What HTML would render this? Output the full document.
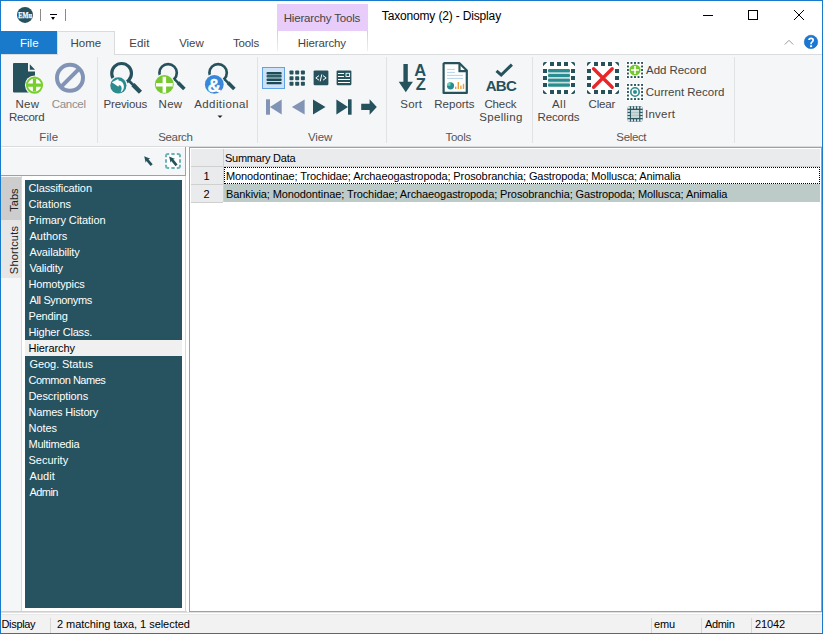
<!DOCTYPE html>
<html><head><meta charset="utf-8">
<style>
*{margin:0;padding:0;box-sizing:border-box}
html,body{width:823px;height:634px;overflow:hidden;background:#fff}
body{position:relative;font-family:"Liberation Sans",sans-serif;font-size:12px;color:#262626}
.a{position:absolute}
.t{position:absolute;white-space:nowrap;line-height:14px;letter-spacing:-0.4px}
.s{font-size:11px;letter-spacing:-0.1px}
#bl{left:0;top:0;width:1px;height:634px;background:#1979ca}
#br{left:822px;top:0;width:1px;height:634px;background:#1979ca}
#bt{left:0;top:0;width:823px;height:1px;background:#1979ca}
#bb{left:0;top:633px;width:823px;height:1px;background:#1979ca}
.rib{left:1px;top:54px;width:821px;height:93px;background:#f5f6f7;border-top:1px solid #dadbdc;border-bottom:1px solid #dadbdc}
.sep{position:absolute;top:57px;width:1px;height:86px;background:#e1e2e4}
.lbl{position:absolute;text-align:center;white-space:nowrap;line-height:13px;color:#444;letter-spacing:-0.4px}
.glbl{position:absolute;text-align:center;white-space:nowrap;color:#555;line-height:14px;letter-spacing:-0.4px}
.li{position:absolute;left:29px;color:#fff;font-size:11px;white-space:nowrap;line-height:16px;letter-spacing:-0.1px}
</style></head><body>
<!-- title bar -->
<div class="a" style="left:1px;top:1px;width:821px;height:30px;background:#fff"></div>
<svg class="a" style="left:0;top:0" width="40" height="30"><circle cx="25" cy="14.9" r="8" fill="#25525d"/><text x="18.3" y="17.6" font-family="Liberation Serif" font-weight="bold" font-size="7.2" fill="#fff" stroke="#fff" stroke-width="0.25" textLength="13.6" lengthAdjust="spacingAndGlyphs">EMu</text></svg>
<div class="a" style="left:40px;top:9px;width:1px;height:12px;background:#8a8a8a"></div>
<div class="a" style="left:50px;top:14px;width:7px;height:1px;background:#000"></div>
<div class="a" style="left:51px;top:17px;width:0;height:0;border-left:2.6px solid transparent;border-right:2.6px solid transparent;border-top:3.2px solid #000"></div>
<div class="a" style="left:65px;top:9px;width:1px;height:12px;background:#8a8a8a"></div>
<!-- contextual -->
<div class="a" style="left:277px;top:4px;width:91px;height:27px;background:#e8cdfa"></div>
<!-- window buttons -->
<div class="a" style="left:703px;top:15px;width:10px;height:1px;background:#000"></div>
<div class="a" style="left:748px;top:10px;width:10px;height:10px;border:1px solid #000"></div>
<svg class="a" style="left:793px;top:9px" width="12" height="12"><path d="M1 1L11 11M11 1L1 11" stroke="#000" stroke-width="1"/></svg>
<!-- tabs -->
<div class="a" style="left:1px;top:31px;width:56px;height:23px;background:#1979ca"></div>
<div class="a" style="left:57px;top:31px;width:58px;height:24px;background:#f5f6f7;border:1px solid #dadbdc;border-bottom:none;z-index:2"></div>
<div class="a" style="left:277px;top:31px;width:1px;height:20px;background:linear-gradient(#d0d0d0,#f0f0f0)"></div>
<div class="a" style="left:367px;top:31px;width:1px;height:20px;background:linear-gradient(#d0d0d0,#f0f0f0)"></div>
<svg class="a" style="left:784px;top:38px" width="10" height="8"><path d="M0.8 6.5L5 2.3L9.2 6.5" stroke="#9a9a9a" stroke-width="1" fill="none"/></svg>
<svg class="a" style="left:0;top:0" width="823" height="60"><circle cx="811" cy="41.9" r="6.7" fill="#1a77d2" stroke="#1266bb" stroke-width="0.6"/><path d="M809 40.1Q809 38.3 811.1 38.3Q813.2 38.3 813.2 40.1Q813.2 41.3 811.9 42.1Q811.1 42.6 811.1 43.8V44.3" fill="none" stroke="#fff" stroke-width="1.7"/><rect x="810.1" y="45.3" width="2" height="1.8" fill="#fff"/></svg>
<!-- ribbon -->
<div class="a rib"></div>
<div class="sep" style="left:97px"></div>
<div class="sep" style="left:257px"></div>
<div class="sep" style="left:386px"></div>
<div class="sep" style="left:532px"></div>
<div class="sep" style="left:734px"></div>


<!--TXT-->
<div class="t" style="left:15.5px;top:98px;color:#444;font-size:11.5px;letter-spacing:0.25px;line-height:13px;z-index:3">New</div>
<div class="t" style="left:8.9px;top:111px;color:#444;font-size:11.5px;letter-spacing:-0.28px;line-height:13px;z-index:3">Record</div>
<div class="t" style="left:51.7px;top:98px;color:#8e8e8e;font-size:11.5px;letter-spacing:-0.30px;line-height:13px;z-index:3">Cancel</div>
<div class="t" style="left:103.4px;top:98px;color:#444;font-size:11.5px;letter-spacing:-0.13px;line-height:13px;z-index:3">Previous</div>
<div class="t" style="left:158.6px;top:98px;color:#444;font-size:11.5px;letter-spacing:0.25px;line-height:13px;z-index:3">New</div>
<div class="t" style="left:194.2px;top:98px;color:#444;font-size:11.5px;letter-spacing:0.41px;line-height:13px;z-index:3">Additional</div>
<div class="t" style="left:400.3px;top:98px;color:#444;font-size:11.5px;letter-spacing:0.20px;line-height:13px;z-index:3">Sort</div>
<div class="t" style="left:434.3px;top:98px;color:#444;font-size:11.5px;letter-spacing:0.00px;line-height:13px;z-index:3">Reports</div>
<div class="t" style="left:484.4px;top:98px;color:#444;font-size:11.5px;letter-spacing:-0.12px;line-height:13px;z-index:3">Check</div>
<div class="t" style="left:479.3px;top:111px;color:#444;font-size:11.5px;letter-spacing:0.30px;line-height:13px;z-index:3">Spelling</div>
<div class="t" style="left:551.9px;top:98px;color:#444;font-size:11.5px;letter-spacing:0.55px;line-height:13px;z-index:3">All</div>
<div class="t" style="left:537.5px;top:111px;color:#444;font-size:11.5px;letter-spacing:-0.15px;line-height:13px;z-index:3">Records</div>
<div class="t" style="left:588.5px;top:98px;color:#444;font-size:11.5px;letter-spacing:-0.17px;line-height:13px;z-index:3">Clear</div>
<div class="t" style="left:646.1px;top:64px;color:#444;font-size:11.5px;letter-spacing:-0.06px;line-height:13px;z-index:3">Add Record</div>
<div class="t" style="left:645.7px;top:86px;color:#444;font-size:11.5px;letter-spacing:0.01px;line-height:13px;z-index:3">Current Record</div>
<div class="t" style="left:645.1px;top:108px;color:#444;font-size:11.5px;letter-spacing:0.22px;line-height:13px;z-index:3">Invert</div>
<div class="t" style="left:39.3px;top:131px;color:#555;font-size:11.5px;letter-spacing:0.10px;line-height:13px;z-index:3">File</div>
<div class="t" style="left:158.2px;top:131px;color:#555;font-size:11.5px;letter-spacing:-0.34px;line-height:13px;z-index:3">Search</div>
<div class="t" style="left:308.0px;top:131px;color:#555;font-size:11.5px;letter-spacing:-0.10px;line-height:13px;z-index:3">View</div>
<div class="t" style="left:445.4px;top:131px;color:#555;font-size:11.5px;letter-spacing:-0.25px;line-height:13px;z-index:3">Tools</div>
<div class="t" style="left:616.3px;top:131px;color:#555;font-size:11.5px;letter-spacing:-0.34px;line-height:13px;z-index:3">Select</div>
<div class="t" style="left:283.7px;top:12px;color:#444;font-size:11.5px;letter-spacing:-0.17px;line-height:13px;z-index:3">Hierarchy Tools</div>
<div class="t" style="left:381.8px;top:9px;color:#000;font-size:12px;letter-spacing:-0.16px;line-height:14px;z-index:3">Taxonomy (2) - Display</div>
<div class="t" style="left:20.0px;top:37px;color:#fff;font-size:11.5px;letter-spacing:0.00px;line-height:13px;z-index:3">File</div>
<div class="t" style="left:70.4px;top:37px;color:#444;font-size:11.5px;letter-spacing:0.03px;line-height:13px;z-index:3">Home</div>
<div class="t" style="left:129.2px;top:37px;color:#444;font-size:11.5px;letter-spacing:0.17px;line-height:13px;z-index:3">Edit</div>
<div class="t" style="left:179.2px;top:37px;color:#444;font-size:11.5px;letter-spacing:-0.07px;line-height:13px;z-index:3">View</div>
<div class="t" style="left:232.9px;top:37px;color:#444;font-size:11.5px;letter-spacing:-0.15px;line-height:13px;z-index:3">Tools</div>
<div class="t" style="left:297.8px;top:37px;color:#444;font-size:11.5px;letter-spacing:-0.11px;line-height:13px;z-index:3">Hierarchy</div>
<!--/TXT-->
<!-- lower panel -->
<div class="a" style="left:1px;top:147px;width:185px;height:28px;background:#f5f6f7;border-right:1px solid #a0a0a0"></div>
<div class="a" style="left:1px;top:175px;width:185px;height:1px;background:#a0a0a0"></div>
<div class="a" style="left:1px;top:147px;width:184px;height:1px;background:#fff"></div>
<div class="a" style="left:1px;top:176px;width:20px;height:435px;background:#f5f6f7"></div>
<div class="a" style="left:21px;top:176px;width:165px;height:436px;background:#fff;border-left:1px solid #d9d9d9;border-right:1px solid #d9d9d9;border-bottom:1px solid #cfcfcf"></div>
<div class="a" style="left:1px;top:177px;width:20px;height:43px;background:#cdcdcd"></div>
<div class="a" style="left:1px;top:220px;width:20px;height:58px;background:#e6e6e6"></div>
<div class="t" style="left:-5.7px;top:192.6px;width:40px;text-align:center;transform:rotate(-90deg);font-size:11px;letter-spacing:0;color:#222">Tabs</div>
<div class="t" style="left:-10.7px;top:242.5px;width:50px;text-align:center;transform:rotate(-90deg);font-size:11px;letter-spacing:0.2px;color:#222">Shortcuts</div>
<div class="a" style="left:25px;top:180px;width:157px;height:428px;background:#26535f"></div>
<div class="a" style="left:25px;top:340px;width:157px;height:16px;background:#f0f0f0"></div>

<div class="li" style="left:28.5px;top:180px;letter-spacing:-0.10px">Classification</div>
<div class="li" style="left:28.5px;top:196px;letter-spacing:-0.04px">Citations</div>
<div class="li" style="left:28.5px;top:212px;letter-spacing:-0.08px">Primary Citation</div>
<div class="li" style="left:29.5px;top:228px;letter-spacing:-0.02px">Authors</div>
<div class="li" style="left:29.5px;top:244px;letter-spacing:-0.14px">Availability</div>
<div class="li" style="left:29.5px;top:260px;letter-spacing:-0.16px">Validity</div>
<div class="li" style="left:28.5px;top:276px;letter-spacing:-0.13px">Homotypics</div>
<div class="li" style="left:29.5px;top:292px;letter-spacing:-0.35px">All Synonyms</div>
<div class="li" style="left:28.5px;top:308px;letter-spacing:-0.18px">Pending</div>
<div class="li" style="left:28.5px;top:324px;letter-spacing:-0.19px">Higher Class.</div>
<div class="li" style="left:28.5px;top:340px;letter-spacing:-0.06px;color:#000">Hierarchy</div>
<div class="li" style="left:29.5px;top:356px;letter-spacing:-0.07px">Geog. Status</div>
<div class="li" style="left:28.5px;top:372px;letter-spacing:-0.47px">Common Names</div>
<div class="li" style="left:28.5px;top:388px;letter-spacing:-0.08px">Descriptions</div>
<div class="li" style="left:28.5px;top:404px;letter-spacing:-0.19px">Names History</div>
<div class="li" style="left:28.5px;top:420px;letter-spacing:-0.05px">Notes</div>
<div class="li" style="left:28.5px;top:436px;letter-spacing:-0.24px">Multimedia</div>
<div class="li" style="left:28.5px;top:452px;letter-spacing:-0.01px">Security</div>
<div class="li" style="left:29.5px;top:468px;letter-spacing:0.07px">Audit</div>
<div class="li" style="left:29.5px;top:484px;letter-spacing:-0.55px">Admin</div>
<!-- grid -->
<div class="a" style="left:186px;top:147px;width:636px;height:466px;background:#fff"></div>
<div class="a" style="left:189px;top:147px;width:633px;height:465px;background:#fff;border:1px solid #a0a0a0"></div>
<div class="a" style="left:191px;top:149px;width:629px;height:17px;background:#eaebed"></div>
<div class="a" style="left:191px;top:166px;width:32px;height:36px;background:#eaebed"></div>
<div class="a" style="left:223px;top:149px;width:1px;height:53px;background:#d0d0d0"></div>
<div class="a" style="left:191px;top:166px;width:629px;height:1px;background:#d0d0d0"></div>
<div class="a" style="left:191px;top:184px;width:32px;height:1px;background:#d0d0d0"></div>
<div class="a" style="left:191px;top:202px;width:32px;height:1px;background:#d0d0d0"></div>
<div class="a" style="left:224px;top:167px;width:596px;height:17px;border:1px dotted #000"></div>
<div class="a" style="left:224px;top:184px;width:596px;height:18px;background:#bccbc8"></div>
<div class="t" style="left:225px;top:151px;font-size:11px;letter-spacing:-0.25px;color:#000">Summary Data</div>
<div class="t" style="left:190px;top:169px;width:33px;text-align:center;font-size:11px;letter-spacing:-0.1px;color:#000">1</div>
<div class="t" style="left:190px;top:187px;width:33px;text-align:center;font-size:11px;letter-spacing:-0.1px;color:#000">2</div>
<div class="t" style="left:226px;top:169px;font-size:11px;letter-spacing:-0.1px;color:#000">Monodontinae; Trochidae; Archaeogastropoda; Prosobranchia; Gastropoda; Mollusca; Animalia</div>
<div class="t" style="left:226px;top:187px;font-size:11px;letter-spacing:-0.1px;color:#000">Bankivia; Monodontinae; Trochidae; Archaeogastropoda; Prosobranchia; Gastropoda; Mollusca; Animalia</div>

<!-- status -->
<div class="a" style="left:1px;top:611px;width:186px;height:1px;background:#cfcfcf"></div>
<div class="a" style="left:1px;top:612px;width:821px;height:21px;background:#f2f2f2;border-top:1px solid #e0e0e0"></div>
<div class="a" style="left:1px;top:613px;width:821px;height:1px;background:#fff"></div>
<div class="a" style="left:1px;top:614px;width:821px;height:1px;background:#e8e8e8"></div>
<div class="a" style="left:50px;top:618px;width:1px;height:15px;background:#d7d7d7"></div>
<div class="a" style="left:651px;top:618px;width:1px;height:15px;background:#d7d7d7"></div>
<div class="a" style="left:701px;top:618px;width:1px;height:15px;background:#d7d7d7"></div>
<div class="a" style="left:751px;top:618px;width:1px;height:15px;background:#d7d7d7"></div>
<div class="t" style="left:1.5px;top:617px;font-size:11px;letter-spacing:-0.33px;color:#000">Display</div>
<div class="t" style="left:57px;top:617px;font-size:11px;letter-spacing:-0.04px;color:#000">2 matching taxa, 1 selected</div>
<div class="t" style="left:654px;top:617px;font-size:11px;letter-spacing:-0.1px;color:#000">emu</div>
<div class="t" style="left:705px;top:617px;font-size:11px;letter-spacing:-0.35px;color:#000">Admin</div>
<div class="t" style="left:755px;top:617px;font-size:11px;letter-spacing:-0.1px;color:#000">21042</div>

<svg class="a" style="left:0;top:0;z-index:5" width="823" height="634" viewBox="0 0 823 634">
<defs>
<g id="mag"><circle cx="0" cy="0" r="8.6" fill="none" stroke="#25525d" stroke-width="3"/><path d="M5.2 6.6L11.6 13" stroke="#25525d" stroke-width="2.6"/><path d="M8.4 9.8L17 18.4" stroke="#25525d" stroke-width="4"/></g>
</defs>
<!-- New Record -->
<path d="M14 63H28V71.5H35V92.4H14Q13 92.4 13 91.4V64Q13 63 14 63Z" fill="#25525d"/>
<path d="M29.8 64.3V69.8H35Z" fill="#25525d"/>
<circle cx="34.5" cy="85.1" r="9.6" fill="#f5f6f7"/>
<circle cx="34.5" cy="85.1" r="7.6" fill="#fff" stroke="#76cf2a" stroke-width="1.9"/>
<path d="M28 85.1H41M34.5 78.6V91.6" stroke="#76cf2a" stroke-width="3.2"/>
<!-- Cancel -->
<circle cx="70" cy="77.8" r="13" fill="none" stroke="#8194b5" stroke-width="4"/>
<path d="M79.5 68.3L60.5 87.3" stroke="#8194b5" stroke-width="4"/>
<!-- Previous -->
<circle cx="121.6" cy="73.35" r="9.87" fill="none" stroke="#25525d" stroke-width="3.15"/><path d="M128.67 80.42L133.62 85.37" stroke="#25525d" stroke-width="2.8"/><path d="M132.91 84.66L140.48 92.23" stroke="#25525d" stroke-width="4.4"/>
<circle cx="118.4" cy="85.4" r="9.3" fill="#f5f6f7"/>
<circle cx="118.4" cy="85.4" r="8.1" fill="#2a8c8f"/>
<path d="M111.8 82.3L118.2 78.9L118.5 80.6Q123.4 81.3 123.9 86.2Q124 90.4 120.6 92.4Q122.4 88.8 121.3 86.6Q120.3 84.8 118.9 85.2L118.4 86.8Z" fill="#fff"/>
<!-- New search -->
<circle cx="168.1" cy="72.8" r="8.7" fill="none" stroke="#25525d" stroke-width="2.65"/><path d="M174.46 79.16L178.35 83.05" stroke="#25525d" stroke-width="2.4"/><path d="M177.93 82.63L184.36 89.06" stroke="#25525d" stroke-width="3.6"/>
<circle cx="164.3" cy="84.4" r="10.6" fill="#f5f6f7"/>
<circle cx="164.3" cy="84.4" r="9.4" fill="#78c930"/>
<path d="M156 84.7H172.7M164.35 76.7V92.7" stroke="#fff" stroke-width="3.5"/>
<!-- Additional -->
<circle cx="218.1" cy="72.8" r="8.7" fill="none" stroke="#25525d" stroke-width="2.65"/><path d="M224.46 79.16L228.35 83.05" stroke="#25525d" stroke-width="2.4"/><path d="M227.93 82.63L234.36 89.06" stroke="#25525d" stroke-width="3.6"/>
<circle cx="214.3" cy="84.4" r="10.6" fill="#f5f6f7"/>
<circle cx="214.3" cy="84.4" r="9.4" fill="#3a87d9"/>
<text x="214.1" y="91.6" text-anchor="middle" font-family="Liberation Sans" font-weight="bold" font-size="18.5" fill="#fff" stroke="#fff" stroke-width="0.35">&amp;</text>
<path d="M217.5 115.5H222.5L220 118Z" fill="#222"/>
<!-- View: list selected -->
<rect x="262.5" y="67.5" width="22" height="21" fill="#cde2f7" stroke="#62a3e6"/>
<rect x="266.8" y="73" width="14.6" height="7" fill="#8fb0b8"/>
<rect x="266.5" y="72" width="15.2" height="2.3" rx="1" fill="#1f4a55"/>
<rect x="266.5" y="75.1" width="15.2" height="2.2" rx="1" fill="#2f5d67"/>
<rect x="266.5" y="78.7" width="15.2" height="2.2" rx="1" fill="#1f4a55"/>
<rect x="266.5" y="82" width="15.2" height="2.2" rx="1" fill="#1f4a55"/>
<g fill="#25525d">
<rect x="289.5" y="70.5" width="4" height="4" rx="0.8"/><rect x="295.2" y="70.5" width="4" height="4" rx="0.8"/><rect x="300.9" y="70.5" width="4" height="4" rx="0.8"/>
<rect x="289.5" y="76.2" width="4" height="4" rx="0.8"/><rect x="295.2" y="76.2" width="4" height="4" rx="0.8"/><rect x="300.9" y="76.2" width="4" height="4" rx="0.8"/>
<rect x="289.5" y="81.8" width="4" height="4" rx="0.8"/><rect x="295.2" y="81.8" width="4" height="4" rx="0.8"/><rect x="300.9" y="81.8" width="4" height="4" rx="0.8"/>
<rect x="313.6" y="70.4" width="14.8" height="14.9" rx="1.2"/>
<rect x="336.6" y="70.4" width="14.8" height="14.9" rx="1.2"/>
</g>
<path d="M319 75.6L315.8 77.9L319 80.2M323 75.6L326.2 77.9L323 80.2M321.8 74.4L320.2 81.4" stroke="#fff" stroke-width="1" fill="none"/>
<path d="M338 73.5H344M338 76.5H344M338 79.5H350M338 82.5H350" stroke="#fff" stroke-width="1"/>
<rect x="346" y="73.3" width="3.6" height="3.2" fill="none" stroke="#fff" stroke-width="0.9"/>
<!-- nav -->
<g fill="#8294b5"><rect x="266" y="99.3" width="4" height="15.4"/><path d="M269.9 107L281.7 99.4V114.6Z"/><path d="M291.9 107L304.6 99.4V114.6Z"/></g>
<g fill="#25525d"><path d="M313 99.4L325.5 107L313 114.6Z"/><path d="M336.4 99.4L348 107L336.4 114.6Z"/><rect x="348" y="99.3" width="3.6" height="15.4"/>
<path d="M361.2 103.8H369.6V99.2L376.8 107L369.6 114.8V110H361.2Z"/></g>
<!-- Sort -->
<g fill="#25525d">
<rect x="403.4" y="64" width="4.4" height="18"/><path d="M398.7 81.7H412.9L405.8 92.2Z"/>
</g>
<text x="420.3" y="75.8" text-anchor="middle" font-family="Liberation Sans" font-weight="bold" font-size="16.5" fill="#25525d">A</text>
<text x="420.8" y="89.9" text-anchor="middle" font-family="Liberation Sans" font-weight="bold" font-size="16.5" fill="#25525d">Z</text>
<!-- Reports -->
<path d="M444.2 63.2H459.5L466.8 70.5V92.9H443.6V63.8Z" fill="#fff" stroke="#25525d" stroke-width="2.2" stroke-linejoin="round"/>
<path d="M459.5 63.2V71.2H466.8" fill="none" stroke="#25525d" stroke-width="2.2"/>
<path d="M447 69.4H455M447 72.4H455M447 75.4H463M447 78.4H463" stroke="#b3d4ee" stroke-width="1"/>
<circle cx="450.5" cy="85.8" r="3.6" fill="#2a8c8f"/><path d="M450.5 85.8V82.2A3.6 3.6 0 0 0 446.9 85.8Z" fill="#5fd3b3"/>
<g fill="#e8a03c"><rect x="455" y="86.6" width="1.4" height="2.4"/><rect x="457.6" y="82" width="1.4" height="7"/><rect x="460.2" y="85.6" width="1.4" height="3.4"/><rect x="462.8" y="83.8" width="1.4" height="5.2"/></g>
<!-- Check Spelling -->
<path d="M496.5 70.9L501.2 75L511.9 64.6" fill="none" stroke="#25525d" stroke-width="3"/>
<text x="501" y="91.4" text-anchor="middle" font-family="Liberation Sans" font-weight="bold" font-size="15" fill="#25525d" letter-spacing="-0.6">ABC</text>
<!-- Select -->
<rect x="543" y="62" width="32" height="32" rx="2" fill="#fff"/><rect x="587" y="62" width="32" height="32" rx="2" fill="#fff"/>
<g id="dash32" fill="#25525d">
<path d="M543 66.2V63.8Q543 62 544.8 62H547.2Z"/><rect x="550" y="62" width="4" height="4"/><rect x="557" y="62" width="4" height="4"/><rect x="564" y="62" width="4" height="4"/><path d="M570.8 62H573.2Q575 62 575 63.8V66.2Z"/>
<rect x="543" y="69" width="4" height="4"/><rect x="571" y="69" width="4" height="4"/>
<rect x="543" y="76" width="4" height="4"/><rect x="571" y="76" width="4" height="4"/>
<rect x="543" y="83" width="4" height="4"/><rect x="571" y="83" width="4" height="4"/>
<path d="M543 89.8V92.2Q543 94 544.8 94H547.2Z"/><rect x="550" y="90" width="4" height="4"/><rect x="557" y="90" width="4" height="4"/><rect x="564" y="90" width="4" height="4"/><path d="M570.8 94H573.2Q575 94 575 92.2V89.8Z"/>
</g>
<rect x="548" y="70" width="22" height="16" fill="#c9dedf"/>
<g fill="#2a8c8f"><rect x="548" y="69" width="22" height="3.2" rx="1.2"/><rect x="548" y="74" width="22" height="3" rx="1.2"/><rect x="548" y="78.8" width="22" height="3" rx="1.2"/><rect x="548" y="83.4" width="22" height="3.3" rx="1.2"/></g>
<use href="#dash32" x="44" y="0"/>
<path d="M593.6 68.8L612.2 87.2M612.2 68.8L593.6 87.2" stroke="#e8262a" stroke-width="3.4" stroke-linecap="round"/>
<!-- small icons -->
<rect x="626.40" y="61.40" width="17.2" height="17.2" fill="#fff"/><g fill="#25525d"><rect x="627.00" y="62.00" width="1.9" height="1.9"/><rect x="627.00" y="65.53" width="1.9" height="1.9"/><rect x="627.00" y="69.05" width="1.9" height="1.9"/><rect x="627.00" y="72.57" width="1.9" height="1.9"/><rect x="627.00" y="76.10" width="1.9" height="1.9"/><rect x="630.53" y="62.00" width="1.9" height="1.9"/><rect x="630.53" y="76.10" width="1.9" height="1.9"/><rect x="634.05" y="62.00" width="1.9" height="1.9"/><rect x="634.05" y="76.10" width="1.9" height="1.9"/><rect x="637.57" y="62.00" width="1.9" height="1.9"/><rect x="637.57" y="76.10" width="1.9" height="1.9"/><rect x="641.10" y="62.00" width="1.9" height="1.9"/><rect x="641.10" y="65.53" width="1.9" height="1.9"/><rect x="641.10" y="69.05" width="1.9" height="1.9"/><rect x="641.10" y="72.57" width="1.9" height="1.9"/><rect x="641.10" y="76.10" width="1.9" height="1.9"/></g>
<circle cx="635" cy="70" r="5.6" fill="#78c930"/>
<path d="M631 70H639M635 66V74" stroke="#fff" stroke-width="1.6"/>
<rect x="626.40" y="83.40" width="17.2" height="17.2" fill="#fff"/><g fill="#25525d"><rect x="627.00" y="84.00" width="1.9" height="1.9"/><rect x="627.00" y="87.53" width="1.9" height="1.9"/><rect x="627.00" y="91.05" width="1.9" height="1.9"/><rect x="627.00" y="94.57" width="1.9" height="1.9"/><rect x="627.00" y="98.10" width="1.9" height="1.9"/><rect x="630.53" y="84.00" width="1.9" height="1.9"/><rect x="630.53" y="98.10" width="1.9" height="1.9"/><rect x="634.05" y="84.00" width="1.9" height="1.9"/><rect x="634.05" y="98.10" width="1.9" height="1.9"/><rect x="637.57" y="84.00" width="1.9" height="1.9"/><rect x="637.57" y="98.10" width="1.9" height="1.9"/><rect x="641.10" y="84.00" width="1.9" height="1.9"/><rect x="641.10" y="87.53" width="1.9" height="1.9"/><rect x="641.10" y="91.05" width="1.9" height="1.9"/><rect x="641.10" y="94.57" width="1.9" height="1.9"/><rect x="641.10" y="98.10" width="1.9" height="1.9"/></g>
<circle cx="635" cy="92" r="4.2" fill="none" stroke="#2a8c8f" stroke-width="1.6"/>
<circle cx="635" cy="92" r="2" fill="#2a8c8f"/>
<rect x="627.3" y="106" width="15.6" height="15.9" rx="2.6" fill="#9fb6ba"/>
<rect x="631.1" y="109.9" width="8" height="8" fill="#cbd8da"/>
<path d="M631.1 112.6H639.1M631.1 115.3H639.1" stroke="#a9bcbf" stroke-width="0.9"/>
<g stroke="#2c5862" stroke-width="1.15" fill="none">
<path d="M627.6 109.3H642.6M627.6 118.6H642.6M630.4 106.3V121.6M639.8 106.3V121.6"/>
<path d="M633.4 106.3V109.3M636.6 106.3V109.3M633.4 118.6V121.6M636.6 118.6V121.6M627.6 112.4H630.4M627.6 115.5H630.4M639.8 112.4H642.6M639.8 115.5H642.6"/>
</g>
<g fill="#eef3f3">
<rect x="628.2" y="106.9" width="1.5" height="1.5"/><rect x="631.3" y="106.9" width="1.5" height="1.5"/><rect x="634.3" y="106.9" width="1.5" height="1.5"/><rect x="637.4" y="106.9" width="1.5" height="1.5"/><rect x="640.6" y="106.9" width="1.5" height="1.5"/>
<rect x="628.2" y="119.5" width="1.5" height="1.5"/><rect x="631.3" y="119.5" width="1.5" height="1.5"/><rect x="634.3" y="119.5" width="1.5" height="1.5"/><rect x="637.4" y="119.5" width="1.5" height="1.5"/><rect x="640.6" y="119.5" width="1.5" height="1.5"/>
<rect x="628.2" y="110.2" width="1.5" height="1.5"/><rect x="628.2" y="113.3" width="1.5" height="1.5"/><rect x="628.2" y="116.4" width="1.5" height="1.5"/>
<rect x="640.6" y="110.2" width="1.5" height="1.5"/><rect x="640.6" y="113.3" width="1.5" height="1.5"/><rect x="640.6" y="116.4" width="1.5" height="1.5"/>
</g>
<!-- panel header pointers -->
<path d="M144.20 156.20 L150.29 158.79 L148.45 159.16 L152.69 164.22 L150.62 165.95 L146.38 160.90 L145.69 162.65Z" fill="#25525d"/>
<rect x="165" y="153" width="16" height="16" rx="2" fill="#fff"/><path d="M166 157.2V156Q166 154 168 154H169.2M171.3 154H174.7M176.8 154H178Q180 154 180 156V157.2M180 159.3V162.7M180 164.8V166Q180 168 178 168H176.8M174.7 168H171.3M169.2 168H168Q166 168 166 166V164.8M166 162.7V159.3" fill="none" stroke="#6ab3b6" stroke-width="2"/>
<path d="M169.10 156.40 L175.19 158.99 L173.35 159.36 L177.59 164.42 L175.52 166.15 L171.28 161.10 L170.59 162.85Z" fill="#25525d"/>
</svg>
<div class="a" id="bl"></div><div class="a" id="br"></div><div class="a" id="bt"></div><div class="a" id="bb"></div>
</body></html>
